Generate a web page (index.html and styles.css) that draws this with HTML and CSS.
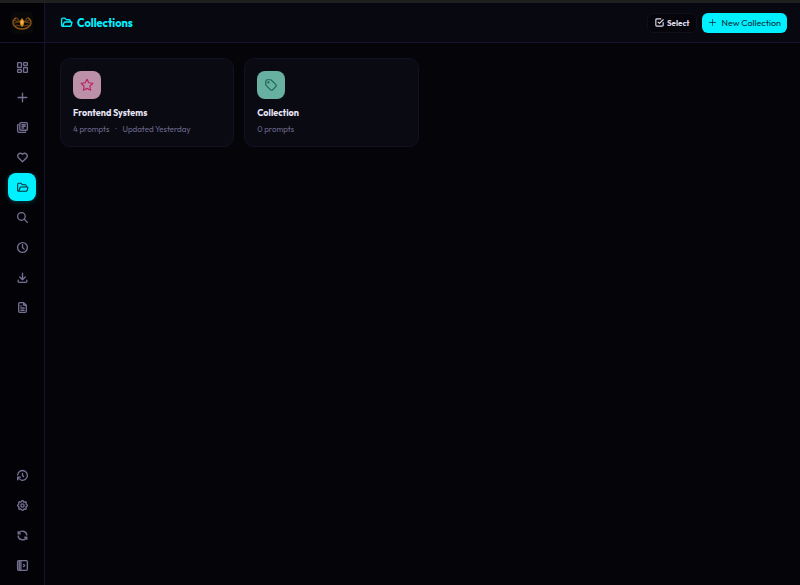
FILE: index.html
```html
<!DOCTYPE html>
<html lang="en">
<head>
<meta charset="utf-8">
<title>Collections</title>
<link rel="stylesheet" href="styles.css">
</head>
<body>
<div class="app">
  <aside class="sidebar">
    <a class="brand" href="#" aria-label="Home">
      <svg viewBox="0 0 22 22"><path d="M5 6C1 8 1 13 5 15M17 6c4 2 4 7 0 9M4 14c2 3 4 3 7 3s5 0 7-3" stroke="#8a5219" stroke-width="1.400"/><path d="M3 8l5 2-5 1M19 8l-5 2 5 1M5 13l4 1M17 13l-4 1M6 6l2 3M16 6l-2 3" stroke="#68400f" stroke-width="1.200"/><path d="M11 6l2.500 3.500-1 4L11 15l-1.500-1.500-1-4z" fill="#cc8420"/><path d="M11 8l1.500 2L11 13l-1.500-3z" fill="#f8b848"/></svg>
    </a>
    <nav class="nav" aria-label="Main">
      <a href="#" aria-label="Dashboard"><svg viewBox="0 0 24 24"><path d="M4 3h5q1 0 1 1v7q0 1-1 1H4q-1 0-1-1V4q0-1 1-1zM15 3h5q1 0 1 1v3q0 1-1 1h-5q-1 0-1-1V4q0-1 1-1zM15 12h5q1 0 1 1v7q0 1-1 1h-5q-1 0-1-1v-7q0-1 1-1zM4 16h5q1 0 1 1v3q0 1-1 1H4q-1 0-1-1v-3q0-1 1-1z"/></svg></a>
      <a href="#" aria-label="New prompt"><svg viewBox="0 0 24 24"><path d="M12 4v16M4 12h16"/></svg></a>
      <a href="#" aria-label="Library"><svg viewBox="0 0 24 24"><rect x="7" y="3" width="14" height="14" rx="2"/><path d="M4 6.500Q3 7 3 8v10q0 3 3 3h10q1 0 1.500-1M11 7h6M11 10h6M11 13h3"/></svg></a>
      <a href="#" aria-label="Favorites"><svg viewBox="0 0 24 24"><path d="M19.500 12.600 12 20l-7.500-7.400A5 5 0 1 1 12 6a5 5 0 1 1 7.500 6.600"/></svg></a>
      <a class="active" href="#" aria-label="Collections" aria-current="page"><svg viewBox="0 0 24 24"><path d="M5 19l2.800-7.400A1 1 0 0 1 8.700 11H21a1 1 0 0 1 1 1.200l-1.500 5.300A2 2 0 0 1 18.600 19H5a2 2 0 0 1-2-2V6a2 2 0 0 1 2-2h4l3 3h5a2 2 0 0 1 2 2v2"/></svg></a>
      <a href="#" aria-label="Search"><svg viewBox="0 0 24 24"><circle cx="10" cy="10" r="7"/><path d="m21 21-6-6"/></svg></a>
      <a href="#" aria-label="Recent"><svg viewBox="0 0 24 24"><circle cx="12" cy="12" r="9"/><path d="M12 7v5l3 3"/></svg></a>
      <a href="#" aria-label="Import"><svg viewBox="0 0 24 24"><path d="M4 17v2a2 2 0 0 0 2 2h12a2 2 0 0 0 2-2v-2M7 11l5 5 5-5M12 4v12"/></svg></a>
      <a href="#" aria-label="Documents"><svg viewBox="0 0 24 24"><path d="M14 3v4a1 1 0 0 0 1 1h4M17 21H7a2 2 0 0 1-2-2V5a2 2 0 0 1 2-2h7l5 5v11a2 2 0 0 1-2 2zM9 9h1M9 13h6M9 17h6"/></svg></a>
    </nav>
    <div class="nav tools">
      <button type="button" aria-label="History"><svg viewBox="0 0 24 24"><path d="M12 8v4l2 2M3.100 11a9 9 0 1 1 .5 4m-.5 5v-5h5"/></svg></button>
      <button type="button" aria-label="Settings"><svg viewBox="0 0 24 24"><path d="M10.300 4.300c.4-1.800 3-1.800 3.400 0a1.700 1.700 0 0 0 2.600 1.100c1.500-1 3.300.8 2.400 2.400a1.700 1.700 0 0 0 1 2.500c1.800.4 1.800 3 0 3.400a1.700 1.700 0 0 0-1 2.600c.9 1.500-.9 3.300-2.400 2.400a1.700 1.700 0 0 0-2.600 1c-.4 1.800-3 1.800-3.400 0a1.700 1.700 0 0 0-2.600-1c-1.500.9-3.300-.9-2.400-2.400a1.700 1.700 0 0 0-1-2.600c-1.800-.4-1.800-3 0-3.400a1.700 1.700 0 0 0 1-2.500c-.9-1.600.9-3.400 2.400-2.400 1 .6 2.300 0 2.600-1.100z"/><circle cx="12" cy="12" r="3"/></svg></button>
      <button type="button" aria-label="Sync"><svg viewBox="0 0 24 24"><path d="M20 11A8.100 8.100 0 0 0 4.500 9M4 5v4h4M4 13a8.100 8.100 0 0 0 15.500 2m.5 4v-4h-4"/></svg></button>
      <button type="button" aria-label="Expand sidebar"><svg viewBox="0 0 24 24"><rect x="3" y="3" width="18" height="18" rx="2"/><path d="M9 3v18M14 10l2 2-2 2M6 4v16"/></svg></button>
    </div>
  </aside>
  <div class="main">
    <header class="header">
      <h1><svg viewBox="0 0 24 24"><path d="M5 19l2.800-7.400A1 1 0 0 1 8.700 11H21a1 1 0 0 1 1 1.200l-1.500 5.300A2 2 0 0 1 18.600 19H5a2 2 0 0 1-2-2V6a2 2 0 0 1 2-2h4l3 3h5a2 2 0 0 1 2 2v2"/></svg>Collections</h1>
      <div class="actions">
        <button class="select" type="button"><svg viewBox="0 0 24 24"><path d="m9 11 3 3 8-8M20 12v6a2 2 0 0 1-2 2H6a2 2 0 0 1-2-2V6a2 2 0 0 1 2-2h9"/></svg>Select</button>
        <button class="create" type="button"><svg viewBox="0 0 24 24"><path d="M12 4v16M4 12h16"/></svg>New Collection</button>
      </div>
    </header>
    <main class="grid">
      <article class="card">
        <span class="tile pink"><svg viewBox="0 0 24 24"><path d="m12 17.800-6.200 3.200 1.200-6.900-5-4.900 6.900-1L12 2l3.100 6.200 6.900 1-5 4.900 1.200 6.900z"/></svg></span>
        <h2>Frontend Systems</h2>
        <p><span>4 prompts</span><span>·</span><span>Updated Yesterday</span></p>
      </article>
      <article class="card">
        <span class="tile green"><svg viewBox="0 0 24 24"><circle cx="7.500" cy="7.500" r="1"/><path d="M3 6v5.200c0 .5.200 1 .6 1.400l7.700 7.700a2.400 2.400 0 0 0 3.400 0l5.600-5.600a2.400 2.400 0 0 0 0-3.400l-7.700-7.700A2 2 0 0 0 11.200 3H6a3 3 0 0 0-3 3z"/></svg></span>
        <h2>Collection</h2>
        <p><span>0 prompts</span></p>
      </article>
    </main>
  </div>
</div>
</body>
</html>
```
FILE: styles.css
```css
* { box-sizing: border-box; }
body {
  margin: 0;
  background: #040409;
  color: #e6e4f5;
  font-family: Outfit, Lato, "Liberation Sans", sans-serif;
}
svg {
  display: block;
  fill: none;
  stroke: currentColor;
  stroke-width: 2;
  stroke-linecap: round;
  stroke-linejoin: round;
}
button { font: inherit; border: 0; padding: 0; }
.app {
  display: flex;
  min-height: 100vh;
  border-top: 3px solid #1e1f1e;
}
.sidebar {
  display: flex;
  flex-direction: column;
  flex: 0 0 45px;
  border-right: 1px solid #151330;
  background: #030307;
}
.brand {
  display: grid;
  place-items: center;
  height: 40px;
  border-bottom: 1px solid #151330;
}
.brand svg {
  width: 22px;
  height: 22px;
  border-radius: 4px;
  background: #080808;
  stroke: none;
}
.nav {
  display: flex;
  flex-direction: column;
  align-items: center;
  gap: 2px;
  padding: 10px 0;
}
.tools { margin-top: auto; padding-bottom: 6px; }
.nav a, .nav button {
  display: grid;
  place-items: center;
  width: 28px;
  height: 28px;
  border-radius: 8px;
  color: #747092;
  background: transparent;
}
.nav svg { width: 13px; height: 13px; stroke-width: 2.5; }
.nav .active {
  background: #00f0ff;
  color: #05313c;
  box-shadow: 0 1px 5px #00f0ff44;
}
.nav .active svg { stroke-width: 2; }
.main { flex: 1; min-width: 0; }
.header {
  display: flex;
  align-items: center;
  justify-content: space-between;
  height: 40px;
  padding: 0 13px 0 15px;
  background: #080811;
  border-bottom: 1px solid #151330;
}
h1, h2, p { margin: 0; }
h1 {
  display: flex;
  align-items: center;
  gap: 4px;
  color: #00f0ff;
  font-size: 11px;
  line-height: 16px;
  font-weight: 700;
}
h1 svg { width: 13px; height: 13px; stroke-width: 2.5; }
.actions { display: flex; gap: 5px; }
.actions button {
  display: flex;
  align-items: center;
  gap: 2px;
  height: 20px;
  border-radius: 6px;
}
.select {
  padding: 0 6px;
  border: 1px solid #10101d;
  background: #05050b;
  color: #dddbea;
  font-size: 8px;
  font-weight: 700;
}
.actions .select { padding: 0 6px; border: 1px solid #10101d; }
.select svg { width: 11px; height: 11px; stroke-width: 2.5; }
.actions .create {
  gap: 5px;
  padding: 0 6px;
  background: #00f0ff;
  color: #062c36;
  font-size: 9px;
}
.create svg { width: 9px; height: 9px; }
.grid {
  display: grid;
  grid-template-columns: repeat(auto-fill, minmax(160px, 1fr));
  gap: 10px;
  padding: 15px 13px 15px 15px;
}
.card {
  padding: 12px;
  border: 1px solid #121224;
  border-radius: 10px;
  background: #0a0a13;
}
.tile {
  display: grid;
  place-items: center;
  width: 28px;
  height: 28px;
  border-radius: 8px;
}
.tile svg { width: 14px; height: 14px; }
.pink { background: #bd90aa; color: #b82362; }
.green { background: #68b0a2; color: #176653; }
h2 {
  margin-top: 8px;
  font-size: 9px;
  line-height: 12px;
  font-weight: 700;
}
.card p {
  display: flex;
  gap: 6px;
  margin-top: 5px;
  color: #6d688b;
  font-size: 8px;
  line-height: 10px;
}
```
